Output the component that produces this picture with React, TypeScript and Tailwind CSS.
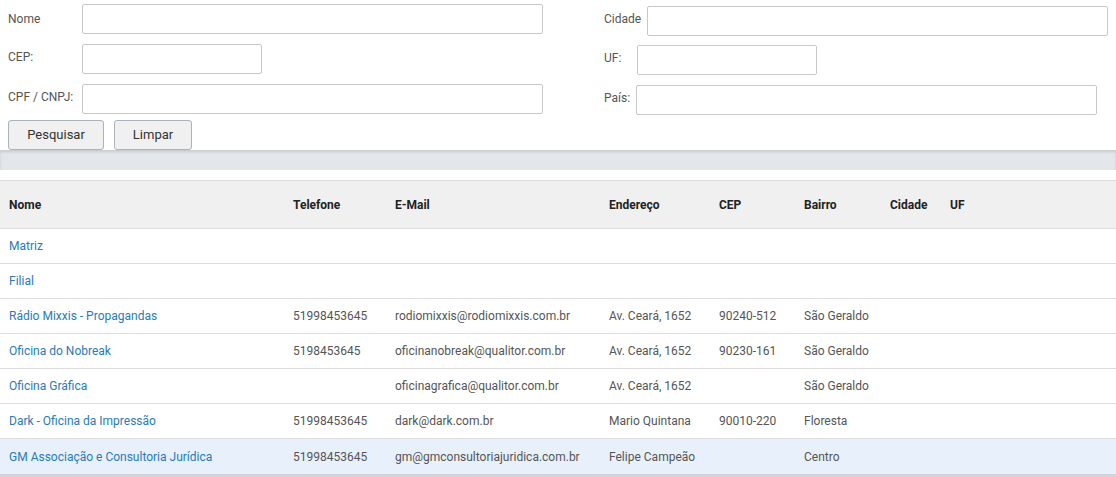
import React from "react";

const rows = [
  ["Matriz", "", "", "", "", ""],
  ["Filial", "", "", "", "", ""],
  ["Rádio Mixxis - Propagandas", "51998453645", "rodiomixxis@rodiomixxis.com.br", "Av. Ceará, 1652", "90240-512", "São Geraldo"],
  ["Oficina do Nobreak", "5198453645", "oficinanobreak@qualitor.com.br", "Av. Ceará, 1652", "90230-161", "São Geraldo"],
  ["Oficina Gráfica", "", "oficinagrafica@qualitor.com.br", "Av. Ceará, 1652", "", "São Geraldo"],
  ["Dark - Oficina da Impressão", "51998453645", "dark@dark.com.br", "Mario Quintana", "90010-220", "Floresta"],
  ["GM Associação e Consultoria Jurídica", "51998453645", "gm@gmconsultoriajuridica.com.br", "Felipe Campeão", "", "Centro"],
];

const cols = "grid grid-cols-[284px_102px_214px_110px_85px_86px_60px_1fr] pl-[9px]";
const inp = "h-[30px] border border-[#c8c8c8] rounded-[2px] bg-white";

export default function App() {
  return (
    <div className="w-[1116px] h-[477px] bg-white text-[12px] text-[#555] overflow-hidden" style={{ fontFamily: "Roboto, 'Liberation Sans', sans-serif" }}>
      <div className="h-[150px] relative">
        <div className="absolute left-0 top-0 w-[560px]">
          <div className="flex items-start mt-[4px]"><span className="w-[82px] pl-[8px] mt-[6px]">Nome</span><div className={`${inp} w-[461px]`} /></div>
          <div className="flex items-center mt-[10px]"><span className="w-[82px] pl-[8px] -mt-[4px]">CEP:</span><div className={`${inp} w-[180px]`} /></div>
          <div className="flex items-center mt-[10px]"><span className="w-[82px] pl-[8px] -mt-[4px]">CPF / CNPJ:</span><div className={`${inp} w-[461px]`} /></div>
          <div className="flex gap-[10px] ml-[8px] mt-[6px]">
            <button className="w-[96px] h-[30px] border border-[#a9b3bd] rounded-[3px] bg-[#f0f0f0] text-[13px] text-[#333]">Pesquisar</button>
            <button className="w-[78px] h-[30px] border border-[#a9b3bd] rounded-[3px] bg-[#f0f0f0] text-[13px] text-[#333]">Limpar</button>
          </div>
        </div>
        <div className="absolute left-[596px] top-0 w-[520px]">
          <div className="flex items-center mt-[6px]"><span className="w-[51px] pl-[8px] -mt-[4px]">Cidade</span><div className={`${inp} w-[461px]`} /></div>
          <div className="flex items-center mt-[9px]"><span className="w-[41px] pl-[8px] -mt-[4px]">UF:</span><div className={`${inp} w-[180px]`} /></div>
          <div className="flex items-center mt-[10px]"><span className="w-[40px] pl-[8px] -mt-[4px]">País:</span><div className={`${inp} w-[461px]`} /></div>
        </div>
      </div>
      <div className="h-[20px] bg-[#e4e7ea] shadow-[inset_0_2px_3px_rgba(0,0,0,0.12)]" />
      <div className="h-[10px]" />
      <div className="border-t border-[#dcdcdc] border-b-[3px] border-b-[#d4d4d4]">
        <div className={`${cols} h-[48px] items-center bg-[#f0f0f0] font-bold text-[#222] border-b border-[#ddd]`}>
          <span>Nome</span><span>Telefone</span><span>E-Mail</span><span>Endereço</span><span>CEP</span><span>Bairro</span><span>Cidade</span><span>UF</span>
        </div>
        {rows.map((r, i) => (
          <div key={i} className={`${cols} h-[35px] items-center ${i === rows.length - 1 ? "bg-[#e8f1fb]" : "border-b border-[#ddd]"}`}>
            <span className="text-[#2a7ab8]">{r[0]}</span>
            <span>{r[1]}</span><span>{r[2]}</span><span>{r[3]}</span><span>{r[4]}</span><span>{r[5]}</span><span /><span />
          </div>
        ))}
      </div>
    </div>
  );
}
